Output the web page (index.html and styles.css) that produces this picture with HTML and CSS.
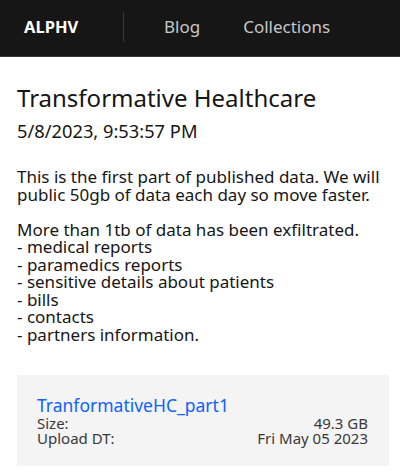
FILE: index.html
```html
<!DOCTYPE html>
<html lang="en">
<head>
    <meta charset="UTF-8">
    <meta name="viewport" content="width=device-width, initial-scale=1.0">
    <title>Transformative Healthcare</title>
    <link rel="stylesheet" href="styles.css">
</head>
<body>

    <header class="top-bar">
        <span class="brand">ALPHV</span>
        <nav class="nav">
            <a href="#">Blog</a>
            <a href="#">Collections</a>
        </nav>
    </header>

    <main class="post">
        <h1 class="post-title">Transformative Healthcare</h1>
        <div class="post-date">5/8/2023, 9:53:57 PM</div>

        <div class="post-text">This is the first part of published data. We will public 50gb of data each day so move faster.

More than 1tb of data has been exfiltrated.
- medical reports
- paramedics reports
- sensitive details about patients
- bills
- contacts
- partners information.</div>

        <div class="file-card">
            <a class="file-name" href="#">TranformativeHC_part1</a>
            <div class="file-row"><span>Size:</span><span>49.3 GB</span></div>
            <div class="file-row"><span>Upload DT:</span><span>Fri May 05 2023</span></div>
        </div>
    </main>

</body>
</html>
```

FILE: styles.css
```css
body {
    margin: 0;
    padding: 0;
    background-color: #ffffff;
    color: #161616;
    font-family: "Noto Sans", Arial, sans-serif;
}

.top-bar {
    height: 53px;
    padding-bottom: 3px;
    background-color: #161616;
    border-bottom: 1px solid #393939;
    display: flex;
    align-items: center;
}

.brand {
    width: 98px;
    padding-left: 24px;
    box-sizing: border-box;
    color: #ffffff;
    font-weight: 700;
    font-size: 16.5px;
}

.nav {
    height: 30px;
    border-left: 1px solid #393939;
    margin-left: 25px;
    display: flex;
    align-items: center;
    padding-left: 40px;
    gap: 43px;
}

.nav a {
    color: #c6c6c6;
    text-decoration: none;
    font-size: 17px;
}

.post {
    padding: 0 11px 0 17px;
}

.post-title {
    margin: 27px 0 0;
    font-size: 24px;
    font-weight: 400;
    line-height: 28px;
}

.post-date {
    font-size: 18.3px;
    line-height: 22px;
    margin-top: 8px;
}

.post-text {
    margin-top: 26px;
    font-size: 17px;
    line-height: 17.5px;
    white-space: pre-line;
}

.file-card {
    margin-top: 32px;
    background-color: #f4f4f4;
    padding: 20px 21px 20px 20px;
}

.file-name {
    display: block;
    color: #0f62fe;
    text-decoration: none;
    font-size: 17.5px;
    line-height: 21px;
}

.file-row {
    display: flex;
    justify-content: space-between;
    font-size: 15px;
    line-height: 15px;
    color: #393939;
}
```
